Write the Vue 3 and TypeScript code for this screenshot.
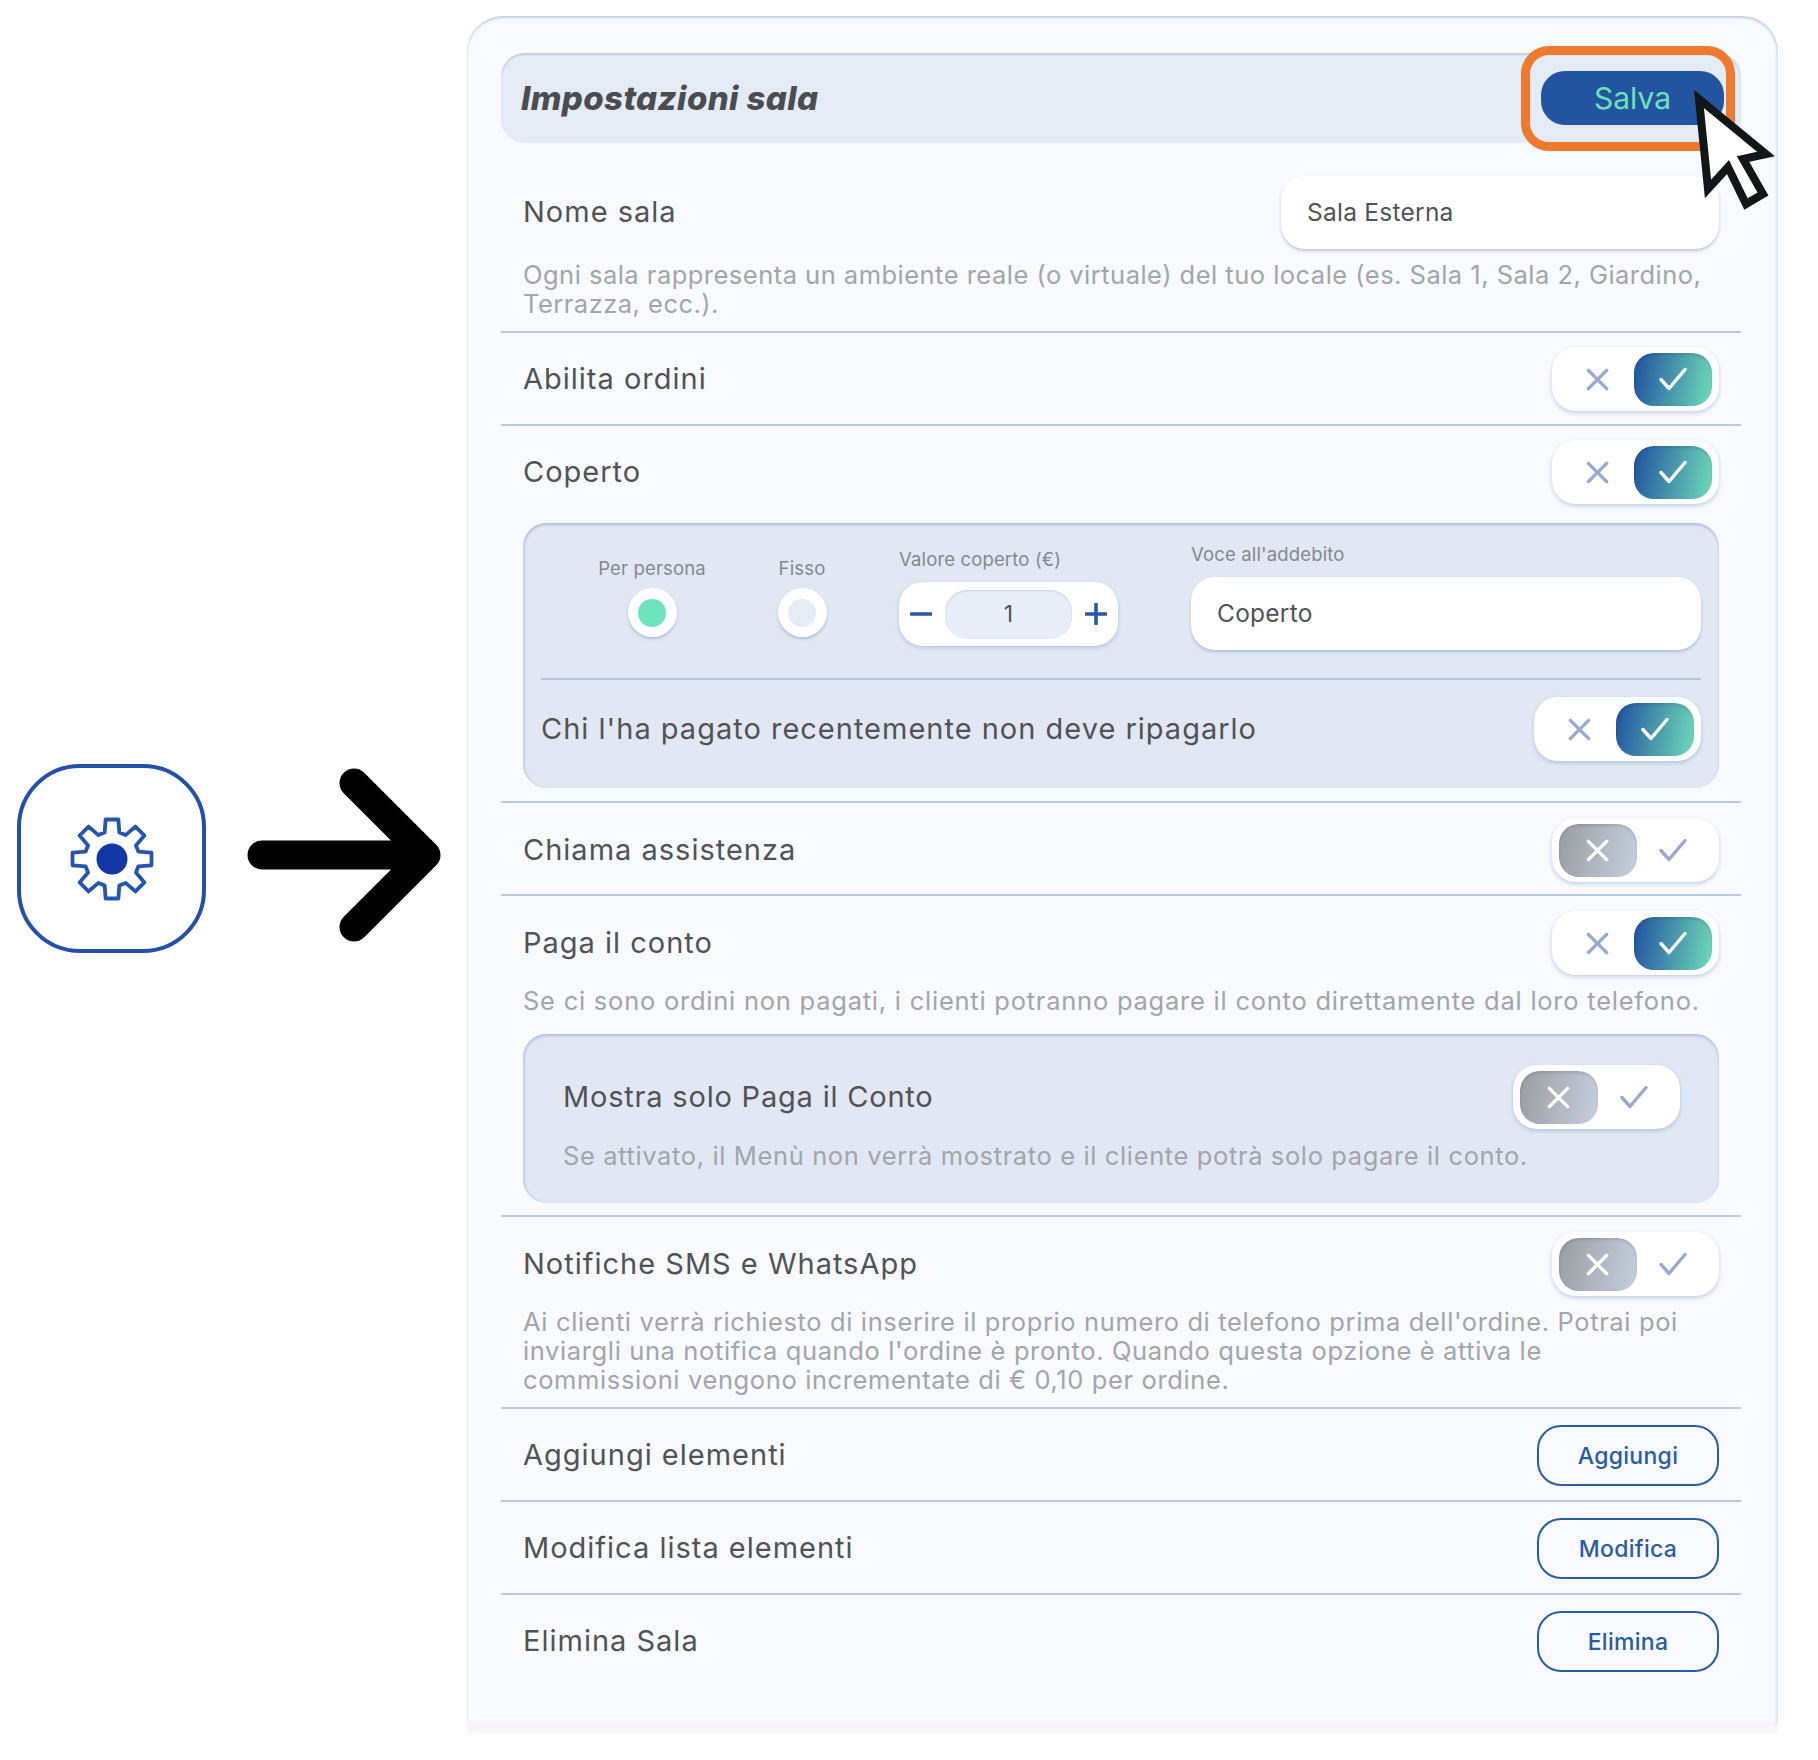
<template>
  <div class="page">
    <svg class="defs" width="0" height="0" aria-hidden="true">
      <symbol id="ico-x" viewBox="0 0 24 24">
        <path d="M2.5 2.5 21.5 21.5M21.5 2.5 2.5 21.5" fill="none" stroke="currentColor" stroke-width="3.6" stroke-linecap="round" />
      </symbol>
      <symbol id="ico-check" viewBox="0 0 28 24">
        <path d="M2 12.5 10 21.5 26 2.5" fill="none" stroke="currentColor" stroke-width="3.4" stroke-linecap="round" stroke-linejoin="round" />
      </symbol>
    </svg>

    <div class="left">
      <div class="gear-box">
        <svg width="90" height="90" viewBox="-45 -45 90 90">
          <path :d="gearPath" fill="none" stroke="#2654ae" stroke-width="3.8" stroke-linejoin="round" />
          <circle r="15.5" fill="#1238a8" />
        </svg>
      </div>
      <svg class="arrow" width="200" height="190" viewBox="0 0 200 190">
        <path d="M15 95H179M107 23 179 95 107 167" fill="none" stroke="#000" stroke-width="29" stroke-linecap="round" stroke-linejoin="round" />
      </svg>
    </div>

    <div class="card">
      <div class="head">
        <h1 class="title">Impostazioni sala</h1>
        <button class="save">Salva</button>
      </div>

      <div class="row row-name">
        <div class="line">
          <span class="label">Nome sala</span>
          <input v-model="roomName" class="text-input name-input" type="text" />
        </div>
        <p class="desc desc-tight">Ogni sala rappresenta un ambiente reale (o virtuale) del tuo locale (es. Sala 1, Sala 2, Giardino,<br />Terrazza, ecc.).</p>
      </div>

      <div class="row row-orders">
        <div class="line">
          <span class="label">Abilita ordini</span>
          <div class="toggle" :class="{ on: flags.ordini }" @click="flags.ordini = !flags.ordini">
            <span class="opt opt-x"><svg class="ix"><use href="#ico-x" /></svg></span>
            <span class="opt opt-v"><svg class="iv"><use href="#ico-check" /></svg></span>
          </div>
        </div>
      </div>

      <div class="row row-cover">
        <div class="line">
          <span class="label">Coperto</span>
          <div class="toggle" :class="{ on: flags.coperto }" @click="flags.coperto = !flags.coperto">
            <span class="opt opt-x"><svg class="ix"><use href="#ico-x" /></svg></span>
            <span class="opt opt-v"><svg class="iv"><use href="#ico-check" /></svg></span>
          </div>
        </div>
        <div class="panel cover-panel">
          <div class="cover-top">
            <label class="radio-col" @click="coverType = 'persona'">
              <span class="small">Per persona</span>
              <span class="radio" :class="{ sel: coverType === 'persona' }"><i></i></span>
            </label>
            <label class="radio-col radio-fisso" @click="coverType = 'fisso'">
              <span class="small">Fisso</span>
              <span class="radio" :class="{ sel: coverType === 'fisso' }"><i></i></span>
            </label>
            <div class="value-col">
              <span class="small">Valore coperto (€)</span>
              <div class="stepper">
                <button class="step" @click="count = Math.max(0, count - 1)">
                  <svg width="22" height="22" viewBox="0 0 22 22"><path d="M1 11H21" stroke="#2a5aa6" stroke-width="3.6" stroke-linecap="round" /></svg>
                </button>
                <span class="count">{{ count }}</span>
                <button class="step" @click="count++">
                  <svg width="22" height="22" viewBox="0 0 22 22"><path d="M1 11H21M11 1V21" stroke="#2a5aa6" stroke-width="3.6" stroke-linecap="round" /></svg>
                </button>
              </div>
            </div>
            <div class="voice-col">
              <span class="small">Voce all'addebito</span>
              <input v-model="voice" class="text-input voice-input" type="text" />
            </div>
          </div>
          <div class="line cover-bottom">
            <span class="label">Chi l'ha pagato recentemente non deve ripagarlo</span>
            <div class="toggle" :class="{ on: flags.recenti }" @click="flags.recenti = !flags.recenti">
              <span class="opt opt-x"><svg class="ix"><use href="#ico-x" /></svg></span>
              <span class="opt opt-v"><svg class="iv"><use href="#ico-check" /></svg></span>
            </div>
          </div>
        </div>
      </div>

      <div class="row row-help">
        <div class="line">
          <span class="label">Chiama assistenza</span>
          <div class="toggle" :class="{ on: flags.assistenza }" @click="flags.assistenza = !flags.assistenza">
            <span class="opt opt-x"><svg class="ix"><use href="#ico-x" /></svg></span>
            <span class="opt opt-v"><svg class="iv"><use href="#ico-check" /></svg></span>
          </div>
        </div>
      </div>

      <div class="row row-bill">
        <div class="line">
          <span class="label">Paga il conto</span>
          <div class="toggle" :class="{ on: flags.conto }" @click="flags.conto = !flags.conto">
            <span class="opt opt-x"><svg class="ix"><use href="#ico-x" /></svg></span>
            <span class="opt opt-v"><svg class="iv"><use href="#ico-check" /></svg></span>
          </div>
        </div>
        <p class="desc desc-wide">Se ci sono ordini non pagati, i clienti potranno pagare il conto direttamente dal loro telefono.</p>
        <div class="panel bill-panel">
          <div class="line">
            <span class="label label-bill">Mostra solo Paga il Conto</span>
            <div class="toggle" :class="{ on: flags.soloConto }" @click="flags.soloConto = !flags.soloConto">
              <span class="opt opt-x"><svg class="ix"><use href="#ico-x" /></svg></span>
              <span class="opt opt-v"><svg class="iv"><use href="#ico-check" /></svg></span>
            </div>
          </div>
          <p class="desc">Se attivato, il Menù non verrà mostrato e il cliente potrà solo pagare il conto.</p>
        </div>
      </div>

      <div class="row row-sms">
        <div class="line">
          <span class="label">Notifiche SMS e WhatsApp</span>
          <div class="toggle" :class="{ on: flags.sms }" @click="flags.sms = !flags.sms">
            <span class="opt opt-x"><svg class="ix"><use href="#ico-x" /></svg></span>
            <span class="opt opt-v"><svg class="iv"><use href="#ico-check" /></svg></span>
          </div>
        </div>
        <p class="desc">Ai clienti verrà richiesto di inserire il proprio numero di telefono prima dell'ordine. Potrai poi<br />inviargli una notifica quando l'ordine è pronto. Quando questa opzione è attiva le<br />commissioni vengono incrementate di € 0,10 per ordine.</p>
      </div>

      <div v-for="(item, i) in actions" :key="item.label" class="row row-action" :class="{ last: i === actions.length - 1 }">
        <div class="line">
          <span class="label">{{ item.label }}</span>
          <button class="outline">{{ item.button }}</button>
        </div>
      </div>

      <div class="highlight"></div>
      <svg class="cursor" width="96" height="130" viewBox="0 0 96 130">
        <path d="M8 10 75 65 52 70 72 105 55 115 37 78 17 100Z" fill="#fff" stroke="#111616" stroke-width="8" stroke-linejoin="miter" />
      </svg>
    </div>
  </div>
</template>

<script setup lang="ts">
import { reactive, ref } from 'vue'

const roomName = ref<string>('Sala Esterna')
const voice = ref<string>('Coperto')
const count = ref<number>(1)
const coverType = ref<'persona' | 'fisso'>('persona')

const flags = reactive({
  ordini: true,
  coperto: true,
  recenti: true,
  assistenza: false,
  conto: true,
  soloConto: false,
  sms: false,
})

const actions = [
  { label: 'Aggiungi elementi', button: 'Aggiungi' },
  { label: 'Modifica lista elementi', button: 'Modifica' },
  { label: 'Elimina Sala', button: 'Elimina' },
]

// ingranaggio a 8 denti, calcolato invece di scriverlo a mano
function buildGear(teeth: number): string {
  const pts: string[] = []
  const step = (Math.PI * 2) / teeth
  for (let i = 0; i < teeth; i++) {
    const a = -Math.PI / 2 + i * step
    const corners: [number, number][] = [
      [27.5, -0.27],
      [40, -0.16],
      [40, 0.16],
      [27.5, 0.27],
    ]
    for (const [r, d] of corners) {
      pts.push(`${(Math.cos(a + d) * r).toFixed(2)} ${(Math.sin(a + d) * r).toFixed(2)}`)
    }
  }
  return `M${pts.join('L')}Z`
}

const gearPath = buildGear(8)
</script>

<style>
html,
body {
  margin: 0;
  background: #fff;
}
</style>

<style scoped>
.page {
  display: flex;
  align-items: flex-start;
  width: 1818px;
  height: 1760px;
  box-sizing: border-box;
  padding-top: 16px;
  font-family: Inter, 'Noto Sans', sans-serif;
  color: #505356;
}

.defs {
  position: absolute;
}

.left {
  display: flex;
  align-items: center;
  width: 467px;
  flex: none;
  box-sizing: border-box;
  padding: 748px 0 0 17px;
}

.gear-box {
  display: flex;
  align-items: center;
  justify-content: center;
  flex: none;
  width: 189px;
  height: 189px;
  box-sizing: border-box;
  border: 4px solid #2450ab;
  border-radius: 63px;
  background: #fff;
}

.arrow {
  margin-left: 41px;
  margin-top: -8px;
}

.card {
  position: relative;
  width: 1311px;
  height: 1717px;
  box-sizing: border-box;
  padding: 37px 37px 0 34px;
  background: #f9fafe;
  border-bottom: 10px solid #f8f4f9;
  border-radius: 36px 36px 0 0;
  box-shadow: inset 0 2px 2px #c3d0e6, inset -2px 0 2px #e3e5ef;
}

.head {
  display: flex;
  align-items: center;
  justify-content: space-between;
  height: 90px;
  box-sizing: border-box;
  padding: 0 17px 0 20px;
  background: #e4ebf4;
  border-radius: 24px;
  box-shadow: inset 0 2px 2px #bfcde4;
}

.title {
  margin: 0;
  font-size: 33px;
  font-weight: 800;
  font-style: italic;
  letter-spacing: 0.4px;
  color: #4a4d50;
}

.save {
  width: 183px;
  height: 54px;
  border: none;
  border-radius: 24px;
  background: #2354a0;
  color: #6ee0b8;
  font-family: inherit;
  font-size: 30px;
}

.row {
  padding: 15px 22px 11px;
  border-bottom: 2px solid #b9c9e3;
}

.row-name {
  padding-top: 33px;
  padding-bottom: 12px;
}

.row-orders {
  padding-top: 14px;
  padding-bottom: 13px;
}

.row-cover {
  padding-top: 14px;
  padding-bottom: 13px;
}

.row-help {
  padding-bottom: 12px;
}

.row-bill {
  padding-bottom: 12px;
}

.row-sms {
  padding-bottom: 12px;
}

.row-action {
  padding-top: 16px;
  padding-bottom: 14px;
}

.row-action.last {
  border-bottom: none;
}

.line {
  display: flex;
  align-items: center;
  justify-content: space-between;
}

.label {
  padding-bottom: 2px;
  font-size: 29px;
  letter-spacing: 1px;
  color: #505356;
}

.label-bill {
  letter-spacing: 0.8px;
}

.desc {
  margin: 11px 0 1px;
  font-size: 25.5px;
  line-height: 29px;
  letter-spacing: 0.62px;
  color: #a2a5a9;
  white-space: nowrap;
}

.desc-tight {
  letter-spacing: 0.48px;
}

.desc-wide {
  letter-spacing: 0.76px;
}

.text-input {
  height: 73px;
  box-sizing: border-box;
  border: none;
  outline: none;
  border-radius: 24px;
  background: #fff;
  box-shadow: 0 2px 3px rgba(125, 150, 205, 0.5);
  font-family: inherit;
  font-size: 24.5px;
  letter-spacing: 0.25px;
  color: #505356;
  padding: 0 26px 2px;
}

.name-input {
  width: 438px;
}

.toggle {
  display: flex;
  align-items: center;
  flex: none;
  width: 167px;
  height: 64px;
  box-sizing: border-box;
  padding: 0 7px;
  background: #fff;
  border-radius: 24px;
  box-shadow: 0 2px 4px rgba(125, 150, 205, 0.45);
  cursor: pointer;
}

.opt {
  display: flex;
  align-items: center;
  justify-content: center;
  flex: none;
  width: 78px;
  height: 53px;
  border-radius: 20px;
  color: #9aa9d0;
}

.opt-x {
  box-sizing: border-box;
  padding-right: 2px;
}

.opt-v {
  margin-left: -3px;
}

.ix {
  width: 23px;
  height: 23px;
}

.iv {
  width: 28px;
  height: 24px;
}

.toggle.on .opt-v {
  color: #fff;
  background: linear-gradient(100deg, #20509f, #6fdcb8);
  box-shadow: inset 0 2px 3px rgba(0, 0, 0, 0.12);
}

.toggle:not(.on) .opt-x {
  color: #fff;
  background: linear-gradient(100deg, #9a9da1, #c6cfdf);
  box-shadow: inset 0 2px 3px rgba(0, 0, 0, 0.12);
}

.panel {
  margin-top: 19px;
  background: #e1e8f3;
  border-radius: 24px;
  box-shadow: inset 0 2px 3px #aebfdc, inset 2px 0 2px #ccd8ea;
}

.cover-panel {
  height: 265px;
  box-sizing: border-box;
  padding: 21px 18px 0;
}

.cover-top {
  display: flex;
  align-items: flex-end;
  height: 136px;
  box-sizing: border-box;
  padding-bottom: 28px;
  border-bottom: 2px solid #b4c5e0;
}

.small {
  font-size: 18.5px;
  line-height: 24px;
  letter-spacing: 0.15px;
  color: #85888c;
}

.radio-col {
  display: flex;
  flex-direction: column;
  align-items: center;
  gap: 8px;
  width: 130px;
  margin: 0 0 13px 46px;
  cursor: pointer;
}

.radio-fisso {
  margin-left: 20px;
}

.radio {
  display: flex;
  align-items: center;
  justify-content: center;
  width: 49px;
  height: 49px;
  border-radius: 50%;
  background: #fff;
  box-shadow: 0 2px 3px rgba(125, 150, 205, 0.5);
}

.radio i {
  width: 28px;
  height: 28px;
  border-radius: 50%;
  background: #e6ecf6;
}

.radio.sel i {
  background: #6ee4bc;
}

.value-col {
  display: flex;
  flex-direction: column;
  gap: 11px;
  width: 219px;
  margin: 0 0 4px 32px;
}

.stepper {
  display: flex;
  align-items: center;
  height: 64px;
  box-sizing: border-box;
  padding: 0 7px;
  background: #fff;
  border-radius: 24px;
  box-shadow: 0 2px 4px rgba(125, 150, 205, 0.45);
}

.step {
  display: flex;
  align-items: center;
  justify-content: center;
  flex: none;
  width: 30px;
  padding: 0;
  border: none;
  background: none;
}

.count {
  flex: 1;
  height: 49px;
  margin: 0 9px;
  border-radius: 22px;
  background: #e8eef7;
  text-align: center;
  line-height: 49px;
  font-size: 23px;
  box-shadow: inset 0 1px 2px #c5d2e8;
}

.voice-col {
  display: flex;
  flex-direction: column;
  gap: 11px;
  width: 510px;
  margin-left: 73px;
}

.voice-input {
  width: 100%;
}

.cover-bottom {
  padding-top: 17px;
}

.bill-panel {
  height: 169px;
  box-sizing: border-box;
  margin-top: 19px;
  padding: 31px 39px 0 40px;
}

.bill-panel .desc {
  margin-top: 12px;
}

.outline {
  width: 182px;
  height: 61px;
  box-sizing: border-box;
  border: 2px solid #2a5ba5;
  border-radius: 24px;
  background: none;
  color: #2a5ba5;
  font-family: inherit;
  font-size: 23px;
  font-weight: 500;
  letter-spacing: 0.3px;
}

.highlight {
  position: absolute;
  left: 1054px;
  top: 30px;
  width: 214px;
  height: 105px;
  box-sizing: border-box;
  border: 9px solid #ef7a2e;
  border-radius: 28px;
}

.cursor {
  position: absolute;
  left: 1224px;
  top: 73px;
}
</style>
